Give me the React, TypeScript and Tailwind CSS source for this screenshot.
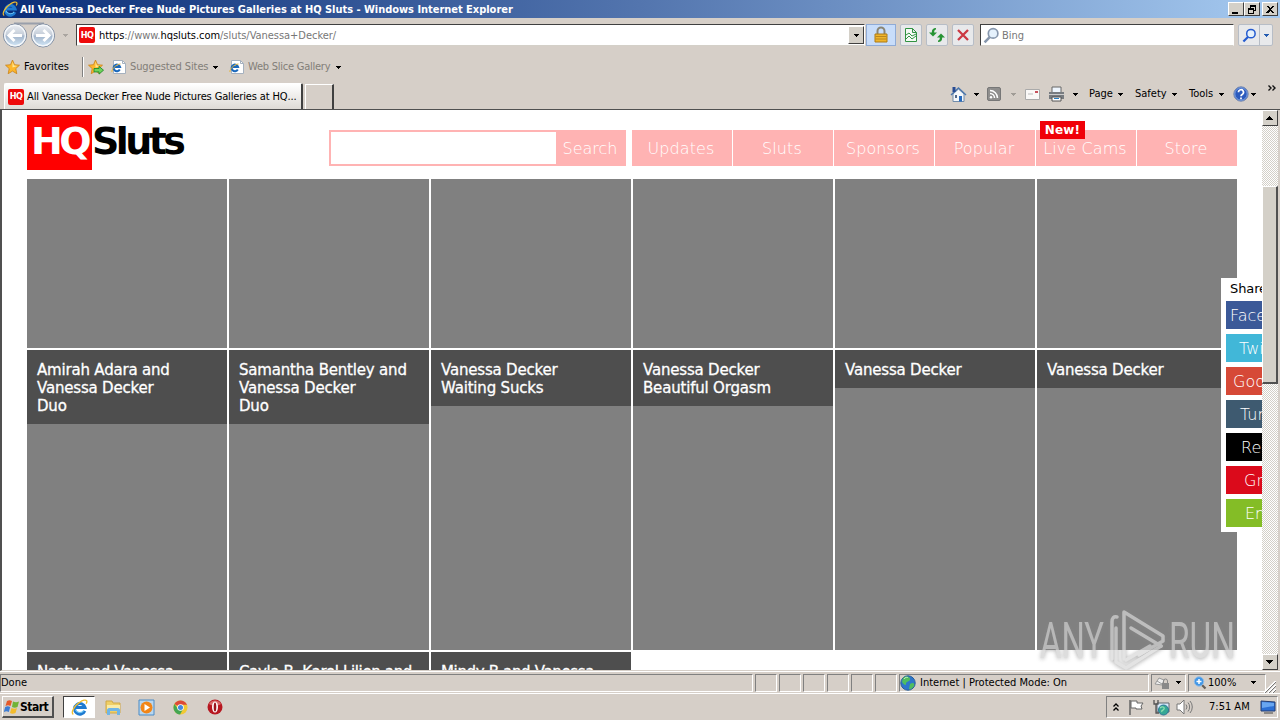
import React from "react";

const navItems = ["Updates", "Sluts", "Sponsors", "Popular", "Live Cams", "Store"];

const galleries = [
  ["Amirah Adara and", "Vanessa Decker", "Duo"],
  ["Samantha Bentley and", "Vanessa Decker", "Duo"],
  ["Vanessa Decker", "Waiting Sucks"],
  ["Vanessa Decker", "Beautiful Orgasm"],
  ["Vanessa Decker"],
  ["Vanessa Decker"],
];

const nextGalleries = ["Nasty and Vanessa", "Cayla B, Karol Lilien and", "Mindy B and Vanessa"];

const shares = [
  { label: "Facebook", style: "bg-[#3b5998] pl-[4px]" },
  { label: "Twitter", style: "bg-[#41b7d8] pl-[13px]" },
  { label: "Google+", style: "bg-[#d64937] pl-[7px]" },
  { label: "Tumblr", style: "bg-[#3e5a70] pl-[14px]" },
  { label: "Reddit", style: "bg-black pl-[15px]" },
  { label: "Grab", style: "bg-[#db0a1b] pl-[18px]" },
  { label: "Email", style: "bg-[#84bd26] pl-[19px]" },
];

function Caret({ className = "" }: { className?: string }) {
  return (
    <svg className={`shrink-0 ${className}`} width="5" height="3" viewBox="0 0 5 3" shapeRendering="crispEdges">
      <path d="M0 0h5v1H4v1H3v1H2V2H1V1H0z" fill="currentColor" />
    </svg>
  );
}

function IeIcon({ size = 16, className = "" }: { size?: number; className?: string }) {
  return (
    <svg className={`shrink-0 ${className}`} width={size} height={size} viewBox="0 0 16 16" fill="none">
      <path d="M13 11.2A5 5 0 1 1 13.2 8H4.5" stroke="#1f7ad0" strokeWidth="2.8" />
      <path d="M12.2 10.7A4.7 4.7 0 0 1 4 10" stroke="#6cc6f5" strokeWidth="1.1" />
      <path d="M2.2 14.5C-.5 13 3 6.5 8 3.2c3-2.2 6-2.8 6.8-1.5.4.8 0 1.9-.5 2.8" stroke="#f0bd2e" strokeWidth="1.2" />
    </svg>
  );
}

function PageIeIcon() {
  return (
    <svg className="shrink-0" width="16" height="16" viewBox="0 0 16 16" fill="none">
      <path d="M2.5 1.5h9l3 3v10h-12z" fill="#fff" stroke="#a5b1bf" />
      <path d="M11.5 1.5v3h3" stroke="#a5b1bf" />
      <path d="M8.8 10.5A3.3 3.3 0 1 1 9.1 8H3.5" stroke="#1a68bc" strokeWidth="2" />
      <path d="M1 13c-1-2 4-8 8.500-8" stroke="#e6b53a" />
    </svg>
  );
}

function HqIcon() {
  return (
    <span className="flex h-4 w-4 shrink-0 items-center justify-center rounded-[2px] bg-[#ee0a0a] text-[9px] font-bold leading-none tracking-[-0.5px] text-white">
      HQ
    </span>
  );
}

function StarIcon({ add = false }: { add?: boolean }) {
  return (
    <svg className="shrink-0" width="16" height="16" viewBox="0 0 16 16">
      <path d="M7.5 1l2 4.7 5 .5-3.7 3.4 1 5.1-4.3-2.6L3.2 14.7l1-5.1L.5 6.2l5-.5z" fill="#fdb62b" stroke="#c98216" strokeWidth=".8" />
      <path d="M7.5 2.5l1.400 4 3.600.4-5 1.500z" fill="#ffe795" />
      {add && <path d="M6 9.500h5V7.300l4.500 3.900-4.500 3.900v-2.200H6z" fill="#6fd35a" stroke="#238a2b" strokeWidth=".9" />}
    </svg>
  );
}

function BackForward() {
  return (
    <svg className="shrink-0" width="56" height="27" viewBox="0 0 56 27" fill="none">
      <defs>
        <linearGradient id="orb" x1="0" y1="0" x2="0" y2="1">
          <stop stopColor="#eef1f5" />
          <stop offset=".48" stopColor="#c3ccd8" />
          <stop offset=".52" stopColor="#a3b5cb" />
          <stop offset="1" stopColor="#d5eafa" />
        </linearGradient>
      </defs>
      <path d="M13 1.5h30" stroke="#999fab" strokeWidth="2" />
      <circle cx="14" cy="13.5" r="11.5" fill="url(#orb)" stroke="#7c899d" />
      <circle cx="14" cy="13.5" r="10.3" stroke="#f5f8fb" strokeWidth="1.3" />
      <circle cx="42" cy="13.5" r="11.5" fill="url(#orb)" stroke="#7c899d" />
      <circle cx="42" cy="13.5" r="10.3" stroke="#f5f8fb" strokeWidth="1.3" />
      <path d="M21 13.5H8.5M13.5 8L8 13.500l5.500 5.500M35 13.500h12.500M42.500 8l5.500 5.500-5.500 5.500" stroke="#fff" strokeWidth="3" />
    </svg>
  );
}

function Magnifier({ color, size = 16 }: { color: string; size?: number }) {
  return (
    <svg className="shrink-0" width={size} height={size} viewBox="0 0 16 16" fill="none">
      <circle cx="9.5" cy="6" r="4.5" fill="#e5f1fc" stroke={color} strokeWidth="1.6" />
      <path d="M6.3 9.5l-4.800 5" stroke={color} strokeWidth="2.4" />
    </svg>
  );
}

function TitleBar() {
  return (
    <div className="flex h-[18px] items-center bg-linear-to-r from-[#0a2d78] via-[#5375ae] to-[#a6caf0] pl-[2px] pr-[2px]">
      <IeIcon />
      <span className="ml-[2px] text-[11px] font-bold leading-none tracking-[-0.03px] whitespace-nowrap text-white">
        All Vanessa Decker Free Nude Pictures Galleries at HQ Sluts - Windows Internet Explorer
      </span>
      <div className="ml-auto flex text-black">
        {["M3 9h6v2H3z", "M5 2h6v6H9v3H3V5h2zM6 4v1h3v2h1V4zM4 7v3h4V7z", "M3 3h2l2 2 2-2h2L8 6l3 4H9L7 8l-2 2H3l3-4z"].map((d, i) => (
          <div
            key={d}
            className={`h-[14px] w-4 border border-t-white border-l-white border-r-[#404040] border-b-[#404040] bg-[#d4d0c8] ${i === 2 ? "ml-[2px]" : ""}`}
          >
            <svg width="14" height="12" viewBox="0 0 14 12" shapeRendering="crispEdges">
              <path d={d} fillRule="evenodd" />
            </svg>
          </div>
        ))}
      </div>
    </div>
  );
}

function ToolButton({ children, className = "" }: { children: React.ReactNode; className?: string }) {
  return (
    <div className={`flex h-[22px] items-center justify-center rounded-[2px] border border-[#b7bdc6] bg-[#e8e9eb] ${className}`}>
      {children}
    </div>
  );
}

function AddressRow() {
  return (
    <div className="flex h-[34px] items-center">
      <BackForward />
      <Caret className="mr-[8px] ml-[6px] text-[#aaa5a0]" />
      <div className="flex h-[22px] w-[789px] items-center border border-t-[#404040] border-l-[#404040] border-r-white border-b-[#d4d0c8] bg-white pl-[2px]">
        <HqIcon />
        <span className="ml-[4px] pt-[2px] text-[11px] tracking-[-0.04px] text-[#777]">
          <span className="text-black">https</span>://www.<span className="text-black">hqsluts.com</span>/sluts/Vanessa+Decker/
        </span>
        <div className="ml-auto flex h-[18px] w-4 items-center justify-center border border-t-white border-l-white border-r-[#404040] border-b-[#404040] bg-[#d4d0c8]">
          <Caret />
        </div>
      </div>
      <div className="ml-[1px] flex h-[22px] w-[30px] items-center justify-center border border-[#8fabd6] bg-[#c8ddfa]">
        <svg width="16" height="18" viewBox="0 0 16 18" fill="none">
          <path d="M4.5 8V5a3.500 3.500 0 0 1 7 0v3" stroke="#8a8574" strokeWidth="2" />
          <path d="M2 8h12v8H2z" fill="#f0b52b" stroke="#ad7a17" />
          <path d="M2.500 10.500h11M2.500 13h11" stroke="#b8861f" />
        </svg>
      </div>
      <ToolButton className="ml-[4px] w-[22px]">
        <svg width="16" height="16" viewBox="0 0 16 16" fill="none" stroke="#319342">
          <path d="M2.500 1.500h7l4 4v9h-11zM9.500 1.500v4h4" fill="#f5faf5" />
          <path d="M3 8l3-2 3 3 4-2M3 12l3-3 3 3 4-3" />
        </svg>
      </ToolButton>
      <ToolButton className="ml-[4px] w-[22px]">
        <svg width="16" height="16" viewBox="0 0 16 16" fill="#279334">
          <path d="M7 1v1.500C5.500 2.800 5.200 3.800 5.200 5.500H8L4 9.500 0 5.500h2.800C2.800 2.500 4 1 7 1z" />
          <path d="M9 15v-1.500c1.500-.3 1.800-1.300 1.800-3H8l4-4 4 4h-2.800c0 3-1.200 4.500-4.200 4.500z" />
        </svg>
      </ToolButton>
      <ToolButton className="ml-[4px] w-[22px]">
        <svg width="14" height="14" viewBox="0 0 14 14">
          <path d="M2 2l10 10M12 2L2 12" stroke="#cb3842" strokeWidth="2.300" />
        </svg>
      </ToolButton>
      <div className="ml-[6px] flex h-[22px] w-[254px] items-center border border-t-[#404040] border-l-[#404040] border-r-white border-b-[#d4d0c8] bg-white pl-[2px]">
        <Magnifier color="#8797ad" size={17} />
        <span className="ml-[2px] pt-[2px] text-[11px] text-[#777]">Bing</span>
      </div>
      <div className="ml-[4px] flex h-[22px] w-[35px] rounded-[2px] border border-[#b7bdc6] bg-[#e8e9eb]">
        <div className="flex w-[21px] items-center justify-center border-r border-[#b7bdc6]">
          <Magnifier color="#245bd0" size={15} />
        </div>
        <div className="flex flex-1 items-center justify-center">
          <Caret className="text-[#245bb0]" />
        </div>
      </div>
    </div>
  );
}

function FavoritesRow() {
  return (
    <div className="flex h-[29px] items-center pt-[1px] pl-[4px] text-[11px]">
      <StarIcon />
      <span className="ml-[3px] w-[47px] tracking-[0.05px]">Favorites</span>
      <div className="mr-[4px] ml-[11px] h-5 w-[2px] border-l border-[#808080] bg-white" />
      <StarIcon add />
      <div className="ml-[7px] flex items-center">
        <PageIeIcon />
        <span className="ml-[3px] w-[79px] pt-[1px] tracking-[-0.1px] whitespace-nowrap text-[#827e78]">Suggested Sites</span>
        <Caret className="ml-[4px]" />
      </div>
      <div className="ml-[11px] flex items-center">
        <PageIeIcon />
        <span className="ml-[3px] w-[83px] pt-[1px] tracking-[-0.24px] whitespace-nowrap text-[#827e78]">Web Slice Gallery</span>
        <Caret className="ml-[5px]" />
      </div>
    </div>
  );
}

function CommandBar() {
  return (
    <div className="ml-auto flex items-center self-stretch pt-[1px] pb-[3px] text-[11px]">
      <svg width="17" height="17" viewBox="0 0 17 17" fill="none">
        <path d="M3 8v7.500h11V8L8.500 3z" fill="#f5f8fb" stroke="#718cab" />
        <path d="M1 9l7.500-7L16 9" stroke="#4e78ac" strokeWidth="1.500" />
        <path d="M2.500 1h3v5h-3z" fill="#274b93" />
        <path d="M9 10h3v5.500H9z" fill="#276abd" />
        <path d="M5 9h2v3H5z" fill="#536a8a" />
      </svg>
      <Caret className="ml-[7px]" />
      <svg className="ml-[8px]" width="14" height="14" viewBox="0 0 14 14" fill="none">
        <rect x=".5" y=".5" width="13" height="13" rx="1.500" fill="#8f8e8d" stroke="#777" />
        <path d="M3 3.500a7.500 7.500 0 0 1 7.500 7.500M3 6.500a4.500 4.500 0 0 1 4.500 4.500" stroke="#fff" strokeWidth="1.500" />
        <circle cx="4" cy="10.300" r="1.200" fill="#fff" />
      </svg>
      <Caret className="ml-[10px] text-[#a09c96]" />
      <svg className="ml-[9px]" width="15" height="11" viewBox="0 0 15 11">
        <path d="M.5.5h14v10H.5z" fill="#faf8f7" stroke="#aaa" />
        <path d="M10 2h3v2h-3z" fill="#c8505b" />
        <path d="M3 5h5" stroke="#bbb" />
      </svg>
      <svg className="ml-[8px]" width="17" height="16" viewBox="0 0 17 16">
        <path d="M4 1h9v6H4z" fill="#eef5fd" stroke="#666" />
        <path d="M1 6h15v7H1z" fill="#777b80" />
        <path d="M1 8h15v1H1z" fill="#ccc" />
        <path d="M4 11h9v4H4z" fill="#fff" stroke="#555" />
        <path d="M6 12.500h5" stroke="#287ec4" />
      </svg>
      <Caret className="ml-[8px]" />
      <span className="ml-[11px] w-[25px] pt-[1px]">Page</span>
      <Caret className="ml-[4px]" />
      <span className="ml-[12px] w-[32px] pt-[1px]">Safety</span>
      <Caret className="ml-[5px]" />
      <span className="ml-[12px] w-[26px] pt-[1px]">Tools</span>
      <Caret className="ml-[4px]" />
      <svg className="ml-[9px]" width="16" height="16" viewBox="0 0 16 16">
        <circle cx="8" cy="8" r="7.200" fill="#2b5abd" stroke="#7688ad" />
        <circle cx="8" cy="8" r="6.200" fill="none" stroke="#91b2ea" strokeWidth=".8" />
        <path d="M5.500 6.300a2.500 2.500 0 1 1 3.700 2.100C8.200 9 8 9.300 8 10.200M8 11.500v1.800" fill="none" stroke="#fff" strokeWidth="1.700" />
      </svg>
      <Caret className="ml-[2px]" />
      <svg className="mr-[4px] mb-[13px] ml-[12px]" width="8" height="6" viewBox="0 0 8 6" fill="none" stroke="#111" strokeWidth="1.400">
        <path d="M.5.5L3 3 .5 5.500M4.500.5L7 3 4.500 5.500" />
      </svg>
    </div>
  );
}

function TabRow() {
  return (
    <div className="flex h-[28px] items-end">
      <div className="ml-[3px] flex h-[26px] w-[299px] items-center rounded-t-[2px] border-t border-l border-r-2 border-t-white border-l-white border-r-[#404040] bg-linear-to-b from-white to-[#dedbd6] pl-[3px]">
        <HqIcon />
        <span className="ml-[3px] pt-[1px] text-[11px] tracking-[-0.13px] whitespace-nowrap">All Vanessa Decker Free Nude Pictures Galleries at HQ...</span>
      </div>
      <div className="ml-[2px] h-[25px] w-[29px] border-t border-l border-r-2 border-t-white border-l-white border-r-[#404040]" />
      <CommandBar />
    </div>
  );
}

function SiteHeader() {
  return (
    <header className="flex h-[69px] items-start pt-[5px] pl-[25px] font-['DejaVu_Sans',sans-serif]">
      <div className="flex h-[55px] font-bold leading-[53px]">
        <span className="w-[65px] bg-[#f00] pl-[4px] text-[38px] tracking-[-3.500px] text-white">HQ</span>
        <span className="w-[92px] text-[38px] tracking-[-3.600px] text-black">Sluts</span>
      </div>
      <div className="mt-[15px] ml-[145px] flex h-9 w-[297px] border-2 border-[#ffb3b3] bg-white">
        <div className="ml-auto flex w-[68px] items-center justify-center bg-[#ffb3b3] pt-[2px] text-base font-extralight text-white">Search</div>
      </div>
      <nav className="mt-[15px] ml-[6px] flex gap-px text-base font-extralight text-white">
        {navItems.map((item) => (
          <div key={item} className="relative flex h-9 w-[100px] items-center justify-center bg-[#ffb3b3] pt-[2px] pr-[2px] tracking-[0.1px]">
            {item}
            {item === "Live Cams" && (
              <span className="absolute -top-[9px] left-[4px] flex h-[18px] w-[45px] items-center justify-center bg-[#f00008] text-[12px] font-bold leading-none tracking-[0.2px]">
                New!
              </span>
            )}
          </div>
        ))}
      </nav>
    </header>
  );
}

function Watermark() {
  return (
    <svg className="absolute top-[496px] left-[1030px] opacity-70 drop-shadow-[0_1px_2px_#888]" width="206" height="66" viewBox="0 0 206 66" fill="none">
      <g fill="#d0d0d0" fontFamily="Roboto, sans-serif" fontSize="50" fontWeight="400">
        <text x="8" y="52" textLength="64" lengthAdjust="spacingAndGlyphs">
          ANY
        </text>
        <text x="137" y="52" textLength="66" lengthAdjust="spacingAndGlyphs">
          RUN
        </text>
      </g>
      <g stroke="#d8d8d8" strokeWidth="3.500" strokeLinejoin="round" strokeLinecap="round">
        <path d="M85 11q-5-1-5 5v37" />
        <path d="M99 22l30 18M92 53V6l39 24v5l-24 14" />
        <path d="M129 40l-35 22-10-6v-34" />
        <path d="M94 54l24-14" />
      </g>
    </svg>
  );
}

function Page() {
  return (
    <main className="relative h-[560px] w-[1260px] overflow-hidden bg-white">
      <SiteHeader />
      <div className="grid grid-cols-[repeat(6,200px)] gap-[2px] pl-[25px] font-['DejaVu_Sans',sans-serif] text-[15px] leading-[18px] tracking-[-0.19px] text-white">
        {galleries.map((_, i) => (
          <div key={i} className="h-[169px] bg-[#808080]" />
        ))}
        {galleries.map((lines, i) => (
          <div key={i} className="h-[300px] bg-[#808080]">
            <div className="bg-[#4e4e4e] pt-[11px] pb-[9px] pl-[10px] whitespace-nowrap [-webkit-text-stroke:0.3px_white]">
              {lines.map((line) => (
                <p key={line}>{line}</p>
              ))}
            </div>
          </div>
        ))}
        {nextGalleries.map((name) => (
          <div
            key={name}
            className="h-[300px] overflow-hidden bg-[#4e4e4e] pt-[11px] pl-[10px] tracking-[-0.35px] whitespace-nowrap [-webkit-text-stroke:0.3px_white]"
          >
            {name}
          </div>
        ))}
      </div>
      <aside className="absolute top-[168px] left-[1219px] w-[120px] bg-white pb-[5px] pl-[5px] font-['DejaVu_Sans',sans-serif]">
        <p className="h-[23px] pl-[4px] text-[13px] leading-[21px] tracking-[-0.1px]">Share</p>
        <div className="flex flex-col gap-[5px] text-base font-extralight text-white">
          {shares.map((share) => (
            <div key={share.label} className={`h-7 leading-[30px] whitespace-nowrap ${share.style}`}>
              {share.label}
            </div>
          ))}
        </div>
      </aside>
      <Watermark />
    </main>
  );
}

function ScrollButton({ up = false }: { up?: boolean }) {
  return (
    <div className="flex h-4 w-4 items-center justify-center border border-t-white border-l-white border-r-[#404040] border-b-[#404040] bg-[#d4d0c8]">
      <svg width="8" height="4" viewBox="0 0 8 4" shapeRendering="crispEdges">
        <path d={up ? "M3 0h1v1h1v1h1v1h1v1H0V3h1V2h1V1h1z" : "M0 0h7v1H6v1H5v1H4v1H3V3H2V2H1V1H0z"} />
      </svg>
    </div>
  );
}

function Scrollbar() {
  return (
    <div className="flex h-[560px] w-4 flex-col bg-[#eae8e4] bg-[repeating-conic-gradient(#fff_0_25%,#d4d0c8_0_50%)] bg-[length:2px_2px]">
      <ScrollButton up />
      <div className="mt-[60px] h-[198px] border-t border-l border-r-2 border-b-2 border-t-white border-l-white border-r-[#505050] border-b-[#505050] bg-[#d4d0c8]" />
      <div className="mt-auto">
        <ScrollButton />
      </div>
    </div>
  );
}

const pane = "border border-t-[#808080] border-l-[#808080] border-r-white border-b-white";

function StatusBar() {
  return (
    <div className="flex h-[22px] items-center gap-[2px] border-t border-white bg-[#d6cfc8] text-[11px]">
      <div className={`${pane} flex h-[18px] w-[753px] items-center pt-[2px]`}>Done</div>
      {[0, 1, 2, 3, 4, 5].map((n) => (
        <div key={n} className={`${pane} h-[18px] w-[22px] ${n === 5 ? "border-r-transparent" : ""}`} />
      ))}
      <div className={`${pane} flex h-[18px] w-[250px] items-center`}>
        <svg width="16" height="16" viewBox="0 0 16 16">
          <circle cx="8" cy="8" r="7.200" fill="#2d76cb" stroke="#285d98" />
          <path d="M3 3c3-3 8-1 7 2-1 2-4 1-4 4 0 2-2 1-4-2zM10 9c3-2 5-1 4 2-1 2-4 4-5 3z" fill="#4fbd5f" />
          <path d="M4 4c1-2 4-2 4-1" stroke="#bfeac5" fill="none" />
        </svg>
        <span className="ml-[4px] pt-[2px] tracking-[0.01px] whitespace-nowrap">Internet | Protected Mode: On</span>
      </div>
      <div className={`${pane} flex h-[18px] w-[35px] items-center pl-[2px]`}>
        <svg width="17" height="16" viewBox="0 0 17 16" fill="none">
          <path d="M1 9l4-6 5 2-2 5zM3 6l5 3" stroke="#999" fill="#eee" />
          <path d="M8 8h7v6H8z" fill="#888" />
          <path d="M9.500 8V6a2 2 0 0 1 4 0v2" stroke="#888" />
        </svg>
        <Caret className="ml-[5px]" />
      </div>
      <div className={`${pane} flex h-[18px] w-[78px] items-center border-r-transparent pl-[4px]`}>
        <svg width="14" height="14" viewBox="0 0 14 14">
          <path d="M8 8l4.500 4.500" stroke="#665f58" strokeWidth="2.200" />
          <circle cx="6" cy="5.500" r="4.700" fill="#4196e6" stroke="#94bce3" />
          <path d="M6 3v5M3.500 5.500h5" stroke="#fff" strokeWidth="1.500" />
        </svg>
        <span className="ml-[1px] w-[31px] pt-[2px]">100%</span>
        <Caret className="ml-[12px]" />
      </div>
      <svg className="mt-[8px] -ml-[4px]" width="12" height="12" viewBox="0 0 12 12">
        <path d="M0 12L12 0M4 12l8-8M8 12l4-4" stroke="#fff" strokeWidth="2" />
        <path d="M1 12L12 1M5 12l7-7M9 12l3-3" stroke="#777" />
      </svg>
    </div>
  );
}

function Taskbar() {
  return (
    <div className="flex h-[27px] items-center border-t border-white bg-[#d6cfc8] pr-[2px] pl-[2px] text-[11px]">
      <div className="flex h-[22px] w-[52px] items-center border-t border-l border-r-2 border-b-2 border-t-white border-l-white border-r-[#505050] border-b-[#505050] pl-[1px]">
        <svg className="shrink-0" width="16" height="16" viewBox="0 0 16 16">
          <path d="M3 2c2-1 3-1 5 0L6.500 7c-2-1-3-1-5 0z" fill="#e65a2a" />
          <path d="M9 2.500c2 1 4 1 6 0L13.500 8c-2 1-3.500 1-5.500 0z" fill="#71b338" />
          <path d="M1.200 8c2-1 3-1 5 0L4.800 13c-2-1-3-1-5 0z" fill="#3e7dd4" />
          <path d="M7.500 9c2 1 4 1 5.500 0l-1.500 5c-2 1-4 1-5.500 0z" fill="#f3bb2c" />
        </svg>
        <span className="text-[12px] font-bold tracking-[-0.5px]">Start</span>
      </div>
      <div className="ml-[9px] flex h-[22px] w-8 items-center justify-center border border-t-[#404040] border-l-[#404040] border-r-white border-b-white bg-white">
        <IeIcon size={17} />
      </div>
      <svg className="ml-[10px]" width="17" height="17" viewBox="0 0 17 17">
        <path d="M1 2h6l1 2h7v10H1z" fill="#efcf67" stroke="#d0a846" />
        <path d="M2 6h13v5H2z" fill="#f9eba7" />
        <path d="M2 16v-5c0-1 1-2 2-2h9c1 0 2 1 2 2v5h-3v-4H5v4z" fill="#70b5e5" />
      </svg>
      <svg className="ml-[16px]" width="17" height="17" viewBox="0 0 17 17">
        <path d="M1 1h15v15H1z" fill="#b9d7ef" stroke="#4b8bc6" />
        <circle cx="8.500" cy="8.500" r="6" fill="#f18619" />
        <path d="M6.500 5l5.500 3.500L6.500 12z" fill="#fff" />
      </svg>
      <svg className="ml-[18px]" width="15" height="15" viewBox="0 0 16 16">
        <circle cx="8" cy="8" r="7.500" fill="#f1c933" />
        <path d="M8 8L1.500 4.250A7.500 7.500 0 0 1 14.500 4.250L15 5H8z" fill="#dc4939" />
        <path d="M1.500 4.250A7.500 7.500 0 0 0 7.500 15.500L10.500 10 8 8 5 9z" fill="#45a653" />
        <circle cx="8" cy="8" r="3.500" fill="#fff" />
        <circle cx="8" cy="8" r="2.700" fill="#4389df" />
      </svg>
      <svg className="ml-[19px]" width="16" height="16" viewBox="0 0 16 16">
        <circle cx="8" cy="8" r="7.500" fill="#b71720" />
        <path d="M2 5a7 7 0 0 1 12 0c-3 2-9 2-12 0" fill="#da6b6b" />
        <ellipse cx="8" cy="8" rx="3" ry="5.500" fill="#fff" />
        <ellipse cx="8" cy="8" rx="1.300" ry="4.500" fill="#9c151d" />
      </svg>
      <div className={`${pane} ml-auto flex h-[22px] w-[172px] items-center pl-[6px]`}>
        <svg width="6" height="9" viewBox="0 0 6 9" fill="none" stroke="#000" strokeWidth="1.300">
          <path d="M.5 3.500L3 1l2.500 2.500M.5 7.500L3 5l2.500 2.500" />
        </svg>
        <svg className="ml-[9px]" width="17" height="16" viewBox="0 0 17 16" fill="#fff" stroke="#666">
          <path d="M2 1v15" strokeWidth="1.500" />
          <path d="M3 2h6v2h6l-2 3 1 3H8V9H3z" />
        </svg>
        <svg className="ml-[8px]" width="17" height="17" viewBox="0 0 17 17" fill="none">
          <path d="M4 4h12v9H4z" fill="#d9eafa" stroke="#61676e" />
          <circle cx="10.500" cy="11" r="5" fill="#37a894" stroke="#2d7596" />
          <path d="M7 9c2-2 5-1 4 1s-3 1-2 3" stroke="#8fe0b0" strokeWidth="1.300" />
          <path d="M1 1v4h4V1M3 5v9h3" stroke="#555" strokeWidth="1.300" />
        </svg>
        <svg className="ml-[6px]" width="17" height="16" viewBox="0 0 17 16" fill="none" stroke="#777">
          <path d="M1 5h3l4-4v14l-4-4H1z" fill="#fff" />
          <path d="M10 5.500a4 4 0 0 1 0 5M12 3.500a7 7 0 0 1 0 9M14 2a9 9 0 0 1 0 12" />
        </svg>
        <span className="ml-[16px] w-[42px] pt-[1px] whitespace-nowrap">7:51 AM</span>
        <svg className="ml-[9px]" width="16" height="14" viewBox="0 0 16 14">
          <path d="M1 1l14 1v9H1z" fill="#2c6fd4" stroke="#263e70" />
          <path d="M2 2l12 1v3L2 8z" fill="#69a6f0" />
          <path d="M4 13h9" stroke="#444" />
        </svg>
      </div>
    </div>
  );
}

function App() {
  return (
    <div className="flex h-[720px] w-[1280px] flex-col overflow-hidden bg-[#d6cfc8] font-['DejaVu_Sans_Condensed','DejaVu_Sans',sans-serif] text-black">
      <TitleBar />
      <div className="h-[91px] pl-[1px]">
        <AddressRow />
        <FavoritesRow />
        <TabRow />
      </div>
      <div className="flex h-[562px] border-t border-b border-l-2 border-[#505050] border-b-[#d6cfc8]">
        <Page />
        <Scrollbar />
      </div>
      <StatusBar />
      <Taskbar />
    </div>
  );
}

export default App;
